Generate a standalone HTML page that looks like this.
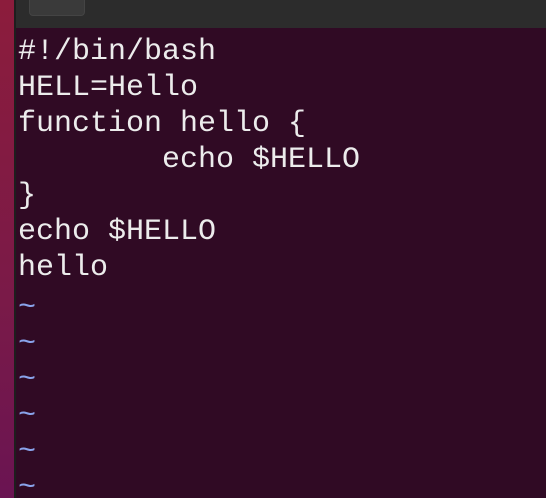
<!DOCTYPE html>
<html><head><style>
html,body{margin:0;padding:0;width:546px;height:498px;overflow:hidden;background:#300a24;position:relative}
.strip{position:absolute;left:0;top:0;width:14px;height:498px;background:linear-gradient(#8c1c3c,#7a1a48 60%,#6a1452)}
.edge{position:absolute;left:14px;top:0;width:2px;height:498px;background:#1e1e1e}
.hdr{position:absolute;left:16px;top:0;width:530px;height:28px;background:#2c2c2c}
.btn{position:absolute;left:29px;top:-6px;width:54px;height:20px;background:#3a3a3a;border:1px solid #444;border-radius:4px}
.term{position:absolute;left:18px;top:34px;width:520px;height:464px;overflow:hidden;font-family:"Liberation Mono",monospace;font-size:30px;line-height:36px;color:#ececec;white-space:pre;letter-spacing:0}
.t{color:#8aa4ec;position:relative;top:4px}
</style></head><body>
<div class="strip"></div><div class="edge"></div>
<div class="hdr"></div><div class="btn"></div>
<div class="term">#!/bin/bash
HELL=Hello
function hello {
        echo $HELLO
}
echo $HELLO
hello
<span class="t">~
~
~
~
~
~</span></div>
</body></html>
